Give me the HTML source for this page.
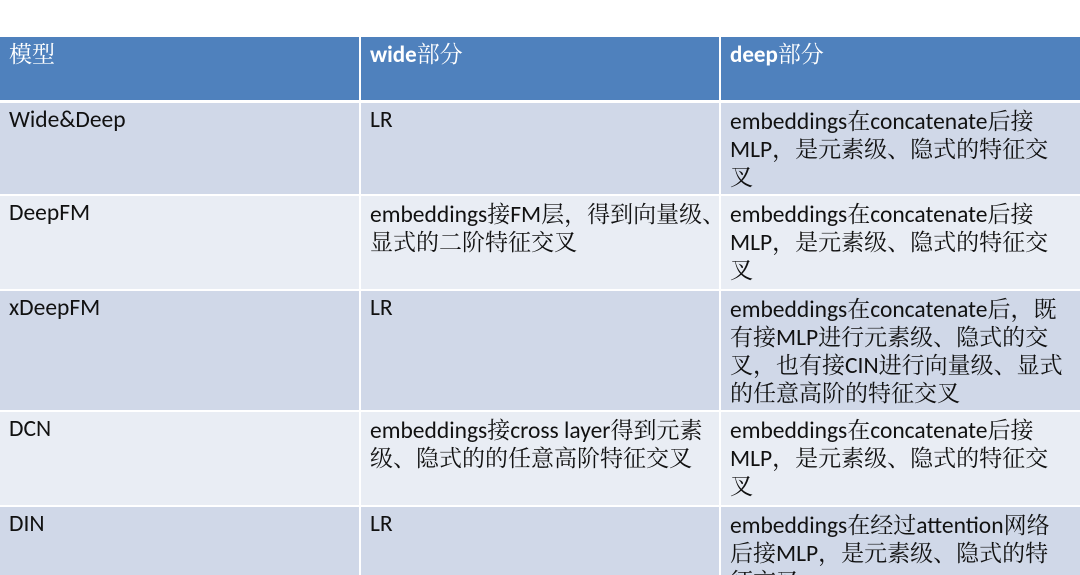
<!DOCTYPE html>
<html><head><meta charset="utf-8"><style>
body{margin:0;width:1080px;height:575px;overflow:hidden;background:#fff;position:relative;font-family:"Carlito","Liberation Sans","Noto Serif CJK SC",serif;}
.c{position:absolute;box-sizing:border-box;padding:3px 0 0 9px;font-size:23.5px;color:#111;overflow:hidden;white-space:nowrap}
.c div{height:28px;line-height:28px}
.h{background:#4f81bd;color:#fff;font-weight:bold;font-size:23px;padding-top:2px}
.o{background:#d0d8e8}.e{background:#e9edf4}
.cjk{font-family:"Noto Serif CJK SC",serif;font-weight:normal;font-size:23px}
</style></head><body>
<div class="c h" style="left:0;top:37px;width:359px;height:63px"><div><span class="cjk">模型</span></div></div>
<div class="c h" style="left:361px;top:37px;width:358px;height:63px"><div>wide<span class="cjk">部分</span></div></div>
<div class="c h" style="left:721px;top:37px;width:359px;height:63px"><div>deep<span class="cjk">部分</span></div></div>

<div class="c o" style="left:0;top:103px;width:359px;height:91px"><div>Wide&amp;Deep</div></div>
<div class="c o" style="left:361px;top:103px;width:358px;height:91px"><div>LR</div></div>
<div class="c o" style="left:721px;top:103px;width:359px;height:91px"><div>embeddings<span class="cjk">在</span>concatenate<span class="cjk">后接</span></div><div>MLP<span class="cjk">，是元素级、隐式的特征交</span></div><div><span class="cjk">叉</span></div></div>

<div class="c e" style="left:0;top:196px;width:359px;height:93px"><div>DeepFM</div></div>
<div class="c e" style="left:361px;top:196px;width:358px;height:93px"><div>embeddings<span class="cjk">接</span>FM<span class="cjk">层，得到向量级、</span></div><div><span class="cjk">显式的二阶特征交叉</span></div></div>
<div class="c e" style="left:721px;top:196px;width:359px;height:93px"><div>embeddings<span class="cjk">在</span>concatenate<span class="cjk">后接</span></div><div>MLP<span class="cjk">，是元素级、隐式的特征交</span></div><div><span class="cjk">叉</span></div></div>

<div class="c o" style="left:0;top:291px;width:359px;height:119px"><div>xDeepFM</div></div>
<div class="c o" style="left:361px;top:291px;width:358px;height:119px"><div>LR</div></div>
<div class="c o" style="left:721px;top:291px;width:359px;height:119px"><div>embeddings<span class="cjk">在</span>concatenate<span class="cjk">后，既</span></div><div><span class="cjk">有接</span>MLP<span class="cjk">进行元素级、隐式的交</span></div><div><span class="cjk">叉，也有接</span>CIN<span class="cjk">进行向量级、显式</span></div><div><span class="cjk">的任意高阶的特征交叉</span></div></div>

<div class="c e" style="left:0;top:412px;width:359px;height:93px"><div>DCN</div></div>
<div class="c e" style="left:361px;top:412px;width:358px;height:93px"><div>embeddings<span class="cjk">接</span>cross layer<span class="cjk">得到元素</span></div><div><span class="cjk">级、隐式的的任意高阶特征交叉</span></div></div>
<div class="c e" style="left:721px;top:412px;width:359px;height:93px"><div>embeddings<span class="cjk">在</span>concatenate<span class="cjk">后接</span></div><div>MLP<span class="cjk">，是元素级、隐式的特征交</span></div><div><span class="cjk">叉</span></div></div>

<div class="c o" style="left:0;top:507px;width:359px;height:68px"><div>DIN</div></div>
<div class="c o" style="left:361px;top:507px;width:358px;height:68px"><div>LR</div></div>
<div class="c o" style="left:721px;top:507px;width:359px;height:68px"><div>embeddings<span class="cjk">在经过</span>attention<span class="cjk">网络</span></div><div><span class="cjk">后接</span>MLP<span class="cjk">，是元素级、隐式的特</span></div><div><span class="cjk">征交叉</span></div></div>
</body></html>
